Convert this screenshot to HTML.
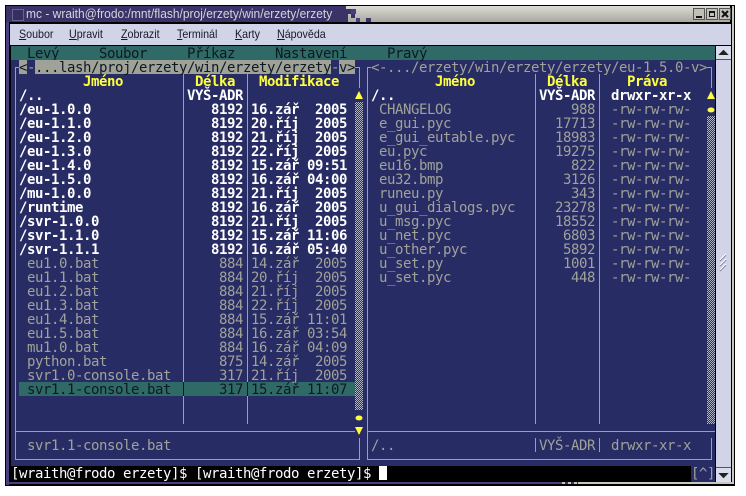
<!DOCTYPE html>
<html><head><meta charset="utf-8"><style>
html,body{margin:0;padding:0;background:#fff;overflow:hidden}
#w{position:relative;width:746px;height:496px;overflow:hidden;background:#fff}
.b{position:absolute}
pre{position:absolute;margin:1px 0 0;font:14px/14px "DejaVu Sans Mono","Liberation Mono",monospace;letter-spacing:-.43px;white-space:pre;color:#a0a29a}
.br{font-weight:bold;color:#fff}
.y{font-weight:bold;color:#ffff40}
.r{text-align:right}
.k{color:#0c1a20}
.s{font:12px/16px "Liberation Sans","DejaVu Sans",sans-serif;position:absolute;color:#181828;white-space:pre;transform:scaleX(.89);transform-origin:0 0}
.l{position:absolute;background:#a0a29a}
</style></head><body><div id="w">
<!-- window frame -->
<div class="b" style="left:5px;top:5px;width:730px;height:481px;background:#000"></div>
<div class="b" style="left:6px;top:6px;width:338px;height:16px;background:#3a3368"></div>
<div class="b" style="left:344px;top:6px;width:386px;height:16px;background:linear-gradient(#dcdcd4,#a8a8a0)"></div>
<div class="b" style="left:340px;top:6px;width:6px;height:8px;background:#3a3368"></div>
<div class="b" style="left:346px;top:9px;width:5px;height:5px;background:#3a3368"></div>
<div class="b" style="left:351px;top:9px;width:5px;height:5px;background:#4a4080"></div>
<div class="b" style="left:351px;top:14px;width:4px;height:4px;background:#3a3368"></div>
<div class="b" style="left:356px;top:18px;width:4px;height:4px;background:#4a4080"></div>
<div class="b" style="left:344px;top:14px;width:4px;height:8px;background:#3a3368"></div>
<div class="b" style="left:366px;top:18px;width:5px;height:4px;background:#3a3368"></div>
<div class="b" style="left:6px;top:22px;width:3px;height:463px;background:#4a4080"></div>
<div class="b" style="left:732px;top:6px;width:2px;height:478px;background:#c8c8c0"></div>
<div class="b" style="left:6px;top:482px;width:556px;height:2px;background:#4a4080"></div>
<div class="b" style="left:562px;top:482px;width:16px;height:2px;background:repeating-linear-gradient(90deg,#c8c8c0 0 3px,#3a3368 3px 6px)"></div>
<div class="b" style="left:578px;top:482px;width:156px;height:2px;background:#c8c8c0"></div>
<!-- title -->
<div class="b" style="left:12px;top:9px;width:10px;height:10px;background:#35305f;border:1px solid #6a6290"></div>
<div class="s" style="left:26px;top:6px;color:#d4d4dc;font-size:13px;transform:scaleX(.923)">mc - wraith@frodo:/mnt/flash/proj/erzety/win/erzety/erzety</div>
<!-- buttons -->
<svg class="b" style="left:693px;top:8px" width="38" height="13">
<g fill="#c0c0b8" stroke="#555"><rect x=".5" y=".5" width="11" height="11"/><rect x="13.5" y=".5" width="11" height="11"/><rect x="26.5" y=".5" width="11" height="11"/></g>
<path d="M3 8h6v2H3z" fill="#111"/><path d="M16 3h6v6h-6z M17 5v3h4V5z" fill="#111" fill-rule="evenodd"/>
<path d="M29 3l6 6M35 3l-6 6" stroke="#111" stroke-width="2"/></svg>
<!-- menu bar -->
<div class="b" style="left:10px;top:24px;width:721px;height:21px;background:#d0d4e6"></div>
<div class="s" style="left:19px;top:26px"><u>S</u>oubor</div>
<div class="s" style="left:69px;top:26px"><u>U</u>pravit</div>
<div class="s" style="left:121px;top:26px"><u>Z</u>obrazit</div>
<div class="s" style="left:177px;top:26px"><u>T</u>erminál</div>
<div class="s" style="left:235px;top:26px"><u>K</u>arty</div>
<div class="s" style="left:277px;top:26px"><u>N</u>ápověda</div>
<!-- terminal -->
<div class="b" style="left:11px;top:46px;width:704px;height:14px;background:#2f6a66"></div>
<div class="b" style="left:11px;top:60px;width:704px;height:406px;background:#282c64"></div>
<div class="b" style="left:11px;top:466px;width:680px;height:16px;background:#000"></div>
<div class="b" style="left:691px;top:466px;width:24px;height:16px;background:#282c64"></div>
<pre class="k" style="left:27px;top:46px">Levý</pre>
<pre class="k" style="left:99px;top:46px">Soubor</pre>
<pre class="k" style="left:187px;top:46px">Příkaz</pre>
<pre class="k" style="left:275px;top:46px">Nastavení</pre>
<pre class="k" style="left:387px;top:46px">Pravý</pre>
<!-- frames -->
<div class="l" style="left:15px;top:67px;width:1px;height:392px"></div>
<div class="l" style="left:15px;top:67px;width:5px;height:1px"></div>
<div class="l" style="left:15px;top:431px;width:340px;height:1px"></div>
<div class="l" style="left:15px;top:459px;width:345px;height:1px"></div>
<div class="l" style="left:359px;top:67px;width:1px;height:21px"></div>
<div class="l" style="left:355px;top:67px;width:5px;height:1px"></div>
<div class="l" style="left:359px;top:438px;width:1px;height:22px"></div>
<div class="l" style="left:183px;top:74px;width:1px;height:350px"></div>
<div class="l" style="left:247px;top:74px;width:1px;height:350px"></div>
<div class="l" style="left:367px;top:67px;width:1px;height:392px"></div>
<div class="l" style="left:367px;top:67px;width:4px;height:1px"></div>
<div class="l" style="left:367px;top:431px;width:348px;height:1px"></div>
<div class="l" style="left:367px;top:459px;width:345px;height:1px"></div>
<div class="l" style="left:711px;top:67px;width:1px;height:21px"></div>
<div class="l" style="left:707px;top:67px;width:5px;height:1px"></div>
<div class="l" style="left:711px;top:438px;width:1px;height:22px"></div>
<div class="l" style="left:535px;top:74px;width:1px;height:350px"></div>
<div class="l" style="left:599px;top:74px;width:1px;height:350px"></div>
<div class="l" style="left:535px;top:438px;width:1px;height:14px"></div>
<div class="l" style="left:599px;top:438px;width:1px;height:14px"></div>
<!-- titles -->
<div class="b" style="left:19px;top:60px;width:8px;height:14px;background:#a0a29a"></div>
<div class="b" style="left:35px;top:60px;width:296px;height:14px;background:#a0a29a"></div>
<div class="b" style="left:339px;top:60px;width:16px;height:14px;background:#a0a29a"></div>
<pre class="k" style="left:19px;top:60px">< </pre>
<pre style="left:27px;top:60px">-</pre>
<pre class="k" style="left:35px;top:60px">...lash/proj/erzety/win/erzety/erzety</pre>
<pre style="left:331px;top:60px">-</pre>
<pre class="k" style="left:339px;top:60px">v></pre>
<pre style="left:371px;top:60px"><-.../erzety/win/erzety/erzety/eu-1.5.0-v></pre>
<!-- headers -->
<pre class="y" style="left:83px;top:74px">Jméno</pre>
<pre class="y" style="left:195px;top:74px">Délka</pre>
<pre class="y" style="left:259px;top:74px">Modifikace</pre>
<pre class="y" style="left:435px;top:74px">Jméno</pre>
<pre class="y" style="left:547px;top:74px">Délka</pre>
<pre class="y" style="left:627px;top:74px">Práva</pre>
<!-- highlight -->
<div class="b" style="left:19px;top:382px;width:336px;height:14px;background:#2f6a66"></div>
<div class="b" style="left:183px;top:382px;width:1px;height:14px;background:#0c1a20"></div>
<div class="b" style="left:247px;top:382px;width:1px;height:14px;background:#0c1a20"></div>
<!-- left panel -->
<pre class="br" style="left:19px;top:88px">/..
/eu-1.0.0
/eu-1.1.0
/eu-1.2.0
/eu-1.3.0
/eu-1.4.0
/eu-1.5.0
/mu-1.0.0
/runtime
/svr-1.0.0
/svr-1.1.0
/svr-1.1.1</pre>
<pre class="br" style="left:187px;top:88px">VYŠ-ADR</pre>
<pre class="br r" style="left:187px;width:56px;top:102px">8192
8192
8192
8192
8192
8192
8192
8192
8192
8192
8192</pre>
<pre class="br" style="left:251px;top:102px">16.zář  2005
20.říj  2005
21.říj  2005
22.říj  2005
15.zář 09:51
16.zář 04:00
21.říj  2005
16.zář  2005
21.říj  2005
15.zář 11:06
16.zář 05:40</pre>
<pre style="left:27px;top:256px">eu1.0.bat
eu1.1.bat
eu1.2.bat
eu1.3.bat
eu1.4.bat
eu1.5.bat
mu1.0.bat
python.bat
svr1.0-console.bat</pre>
<pre class="r" style="left:187px;width:56px;top:256px">884
884
884
884
884
884
884
875
317</pre>
<pre style="left:251px;top:256px">14.zář  2005
20.říj  2005
21.říj  2005
22.říj  2005
15.zář 11:01
16.zář 03:54
16.zář 04:09
14.zář  2005
21.říj  2005</pre>
<pre class="k" style="left:27px;top:382px">svr1.1-console.bat</pre>
<pre class="k r" style="left:187px;width:56px;top:382px">317</pre>
<pre class="k" style="left:251px;top:382px">15.zář 11:07</pre>
<pre style="left:27px;top:438px">svr1.1-console.bat</pre>
<!-- right panel -->
<pre class="br" style="left:371px;top:88px">/..</pre>
<pre class="br" style="left:539px;top:88px">VYŠ-ADR</pre>
<pre class="br" style="left:611px;top:88px">drwxr-xr-x</pre>
<pre style="left:379px;top:102px">CHANGELOG
e_gui.pyc
e_gui_eutable.pyc
eu.pyc
eu16.bmp
eu32.bmp
runeu.py
u_gui_dialogs.pyc
u_msg.pyc
u_net.pyc
u_other.pyc
u_set.py
u_set.pyc</pre>
<pre class="r" style="left:539px;width:56px;top:102px">988
17713
18983
19275
822
3126
343
23278
18552
6803
5892
1001
448</pre>
<pre style="left:611px;top:102px">-rw-rw-rw-
-rw-rw-rw-
-rw-rw-rw-
-rw-rw-rw-
-rw-rw-rw-
-rw-rw-rw-
-rw-rw-rw-
-rw-rw-rw-
-rw-rw-rw-
-rw-rw-rw-
-rw-rw-rw-
-rw-rw-rw-
-rw-rw-rw-</pre>
<pre style="left:371px;top:438px">/..</pre>
<pre style="left:539px;top:438px">VYŠ-ADR</pre>
<pre style="left:611px;top:438px">drwxr-xr-x</pre>
<!-- mc scrollbars -->
<svg class="b" style="left:0;top:0" width="746" height="496" shape-rendering="crispEdges">
<defs><pattern id="ch" width="2" height="2" patternUnits="userSpaceOnUse"><rect width="2" height="2" fill="#282c64"/><rect width="1" height="1" fill="#b4b8cc"/><rect x="1" y="1" width="1" height="1" fill="#b4b8cc"/></pattern></defs>
<rect x="355" y="102" width="8" height="308" fill="url(#ch)"/>
<rect x="707" y="116" width="8" height="308" fill="url(#ch)"/>
</svg>
<svg class="b" style="left:0;top:0" width="746" height="496">
<g fill="#ffff40">
<path d="M359 91l4 8h-8z"/><ellipse cx="359" cy="418" rx="3.5" ry="2.5"/><path d="M355 427h8l-4 8z"/>
<path d="M711 91l4 8h-8z"/><ellipse cx="711" cy="110" rx="3.5" ry="2.5"/>
</g></svg>
<!-- command line -->
<pre style="left:11px;top:466px;color:#fff">[wraith@frodo erzety]$ [wraith@frodo erzety]$ </pre>
<div class="b" style="left:379px;top:466px;width:8px;height:14px;background:#fff"></div>
<pre style="left:691px;top:466px">[^]</pre>
<!-- gtk scrollbar -->
<div class="b" style="left:716px;top:46px;width:15px;height:436px;background:#d0d4e6"></div>
<div class="b" style="left:716px;top:46px;width:15px;height:14px;background:#d8dcec;border-bottom:1px solid #555;box-sizing:border-box"></div>
<div class="b" style="left:716px;top:467px;width:15px;height:15px;background:#d8dcec;border-top:1px solid #555;box-sizing:border-box"></div>
<svg class="b" style="left:716px;top:46px" width="15" height="436">
<path d="M3.5 8.5L7.5 4.5 11.5 8.5z" fill="#222" stroke="#222"/>
<path d="M3.5 427.5L7.5 431.5 11.5 427.5z" fill="#222" stroke="#222"/>
<g stroke="#6a6c90" stroke-width="1.2"><path d="M4 215l6-6M4 220l6-6M4 225l6-6"/></g>
<g stroke="#fff"><path d="M4 214l6-6M4 219l6-6M4 224l6-6"/></g>
</svg>
</div></body></html>
